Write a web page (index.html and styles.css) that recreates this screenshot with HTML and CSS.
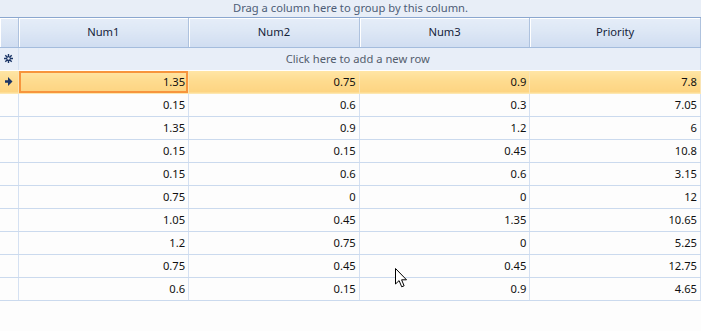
FILE: index.html
```html
<!DOCTYPE html>
<html>
<head>
<title>Grid</title>
<meta charset="UTF-8">
<link rel="stylesheet" href="styles.css">
</head>
<body>
<div class="grid">
  <div class="group-panel">Drag a column here to group by this column.</div>
  <table class="data">
    <thead>
      <tr>
        <th class="indicator"></th>
        <th>Num1</th>
        <th>Num2</th>
        <th>Num3</th>
        <th>Priority</th>
      </tr>
    </thead>
    <tbody>
      <tr class="new-row">
        <td class="indicator"><svg width="9" height="9" viewBox="0 0 9 9"><path d="M4.5 0v9M0 4.5h9M1.3 1.3l6.4 6.4M7.7 1.3l-6.4 6.4" stroke="#1b3566" stroke-width="1.4"/><circle cx="4.5" cy="4.5" r="1.2" fill="#e8eef8"/></svg></td>
        <td colspan="4" class="new-text">Click here to add a new row</td>
      </tr>
      <tr class="selected">
        <td class="indicator"><svg width="8" height="9" viewBox="0 0 8 9"><path d="M0 3.2h3v-3.2l4.5 4.5-4.5 4.5v-3.2h-3z" fill="#1b3566"/></svg></td>
        <td class="current">1.35</td><td>0.75</td><td>0.9</td><td>7.8</td>
      </tr>
      <tr><td class="indicator"></td><td>0.15</td><td>0.6</td><td>0.3</td><td>7.05</td></tr>
      <tr><td class="indicator"></td><td>1.35</td><td>0.9</td><td>1.2</td><td>6</td></tr>
      <tr><td class="indicator"></td><td>0.15</td><td>0.15</td><td>0.45</td><td>10.8</td></tr>
      <tr><td class="indicator"></td><td>0.15</td><td>0.6</td><td>0.6</td><td>3.15</td></tr>
      <tr><td class="indicator"></td><td>0.75</td><td>0</td><td>0</td><td>12</td></tr>
      <tr><td class="indicator"></td><td>1.05</td><td>0.45</td><td>1.35</td><td>10.65</td></tr>
      <tr><td class="indicator"></td><td>1.2</td><td>0.75</td><td>0</td><td>5.25</td></tr>
      <tr><td class="indicator"></td><td>0.75</td><td>0.45</td><td>0.45</td><td>12.75</td></tr>
      <tr><td class="indicator"></td><td>0.6</td><td>0.15</td><td>0.9</td><td>4.65</td></tr>
    </tbody>
  </table>
  <svg class="cursor" width="14" height="21" viewBox="0 0 14 21"><path d="M0.5 0.5v15.5l3.6-3.4 2.6 6.2 2.4-1-2.5-6h4.9z" fill="#ffffff" stroke="#000000" stroke-width="1"/></svg>
</div>
</body>
</html>
```

FILE: styles.css
```css
body {
  margin: 0;
  background-color: #fdfdfd;
  font-family: "Noto Sans", "DejaVu Sans", sans-serif;
  font-size: 11.2px;
}
.grid {
  position: relative;
  width: 701px;
  height: 331px;
  overflow: hidden;
}
.group-panel {
  height: 18px;
  line-height: 15px;
  text-align: center;
  color: #4d5d76;
  background-color: #e8eef7;
  border-bottom: 1px solid #8ba7cf;
  box-sizing: border-box;
}
.data {
  border-collapse: collapse;
  table-layout: fixed;
  width: 701px;
}
.data th {
  height: 29px;
  padding: 0 0 1px 0;
  font-weight: normal;
  color: #15233a;
  background: linear-gradient(#e5edf8, #dde7f5 45%, #d0ddf1);
  border-right: 1px solid #aec2de;
  border-bottom: 1px solid #a4bcdd;
  box-shadow: inset 1px 1px 0 #ffffff;
  box-sizing: border-box;
}
.data th.indicator {
  width: 18px;
}
.data td {
  height: 23px;
  padding: 0 3px 0 0;
  text-align: right;
  color: #101010;
  border-right: 1px solid #d5e1f2;
  border-bottom: 1px solid #cbdaee;
  box-sizing: border-box;
}
.data td.indicator {
  padding: 0;
  text-align: center;
}
.data td.indicator svg {
  display: block;
  margin: 0 auto;
}
.new-row td {
  background-color: #e8eef8;
  border-bottom: 1px solid #ffffff;
}
.new-row td.new-text {
  text-align: center;
  color: #535d6c;
}
.selected td {
  background: linear-gradient(#ffe6a6, #fedb8e 50%, #fdd482);
  border-right-color: #f9e4b4;
  border-bottom: 1px solid #fde7b0;
}
.selected td.current {
  box-shadow: inset 0 0 0 2px #f7953d;
}
.cursor {
  position: absolute;
  left: 395px;
  top: 268px;
}
```
